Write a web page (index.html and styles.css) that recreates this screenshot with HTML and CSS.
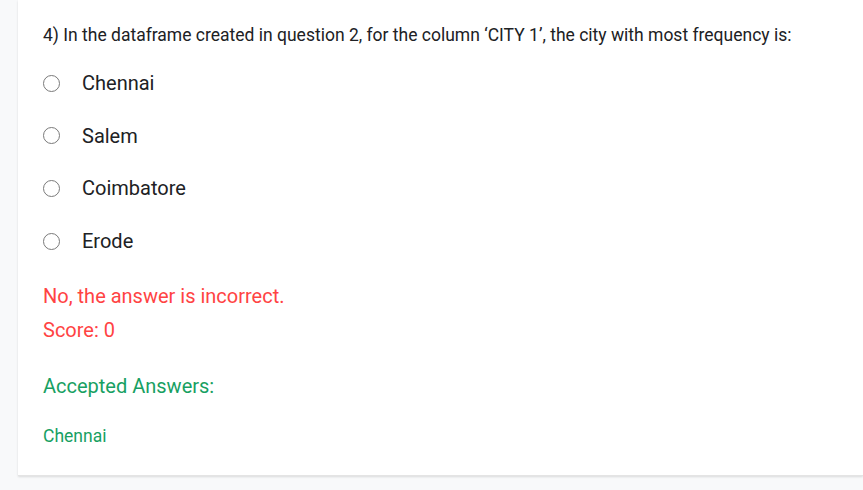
FILE: index.html
```html
<!DOCTYPE html>
<html>
<head>
<meta charset="utf-8">
<link rel="stylesheet" href="styles.css">
</head>
<body>
<div class="card">
  <div class="question">4) In the dataframe created in question 2, for the column ‘CITY 1’, the city with most frequency is:</div>
  <div class="options">
    <label class="option"><span class="radio"></span><span class="opt-text">Chennai</span></label>
    <label class="option"><span class="radio"></span><span class="opt-text">Salem</span></label>
    <label class="option"><span class="radio"></span><span class="opt-text">Coimbatore</span></label>
    <label class="option"><span class="radio"></span><span class="opt-text">Erode</span></label>
  </div>
  <div class="feedback">No, the answer is incorrect.</div>
  <div class="score">Score: 0</div>
  <div class="accepted">Accepted Answers:</div>
  <div class="answer">Chennai</div>
</div>
</body>
</html>
```

FILE: styles.css
```css
html, body {
  margin: 0;
  padding: 0;
}
body {
  background: #f8f9fa;
  font-family: Roboto, "Liberation Sans", sans-serif;
  width: 863px;
  height: 490px;
  overflow: hidden;
}
.card {
  margin-left: 18px;
  background: #fff;
  height: 476px;
  box-shadow: 0 1px 2px rgba(0,0,0,0.12);
  border-bottom: 1px solid #e4e4e4;
  padding: 0 0 0 25px;
  box-sizing: border-box;
  display: flex;
  flex-direction: column;
}
.question {
  margin-top: 25px;
  font-size: 17.5px;
  line-height: 20px;
  color: #202124;
  white-space: nowrap;
}
.options {
  margin-top: 27px;
  display: flex;
  flex-direction: column;
  gap: 30.7px;
}
.option {
  display: flex;
  align-items: center;
  height: 22px;
}
.radio {
  width: 15px;
  height: 15px;
  border: 1.5px solid #7a7a7a;
  border-radius: 50%;
  margin-left: 0;
  margin-right: 22px;
  flex: none;
}
.opt-text {
  font-size: 20px;
  color: #202124;
}
.feedback {
  margin-top: 33px;
  font-size: 20px;
  line-height: 22px;
  color: #ff4343;
}
.score {
  margin-top: 12px;
  font-size: 20px;
  line-height: 22px;
  color: #ff4343;
}
.accepted {
  margin-top: 34px;
  font-size: 20px;
  line-height: 22px;
  color: #17a062;
}
.answer {
  margin-top: 29px;
  font-size: 17.5px;
  line-height: 20px;
  color: #17a062;
}
```
